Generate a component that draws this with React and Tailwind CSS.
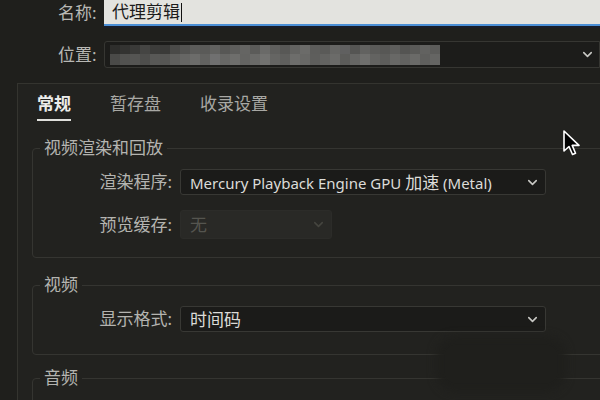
import React from 'react';
import { ChevronDown } from 'lucide-react';

const blurTop = [
  'bg-[#2e2e2c]', 'bg-[#333331]', 'bg-[#3a3a38]', 'bg-[#454543]', 'bg-[#3c3c3a]', 'bg-[#3a3a38]',
  'bg-[#4a4a48]', 'bg-[#535351]', 'bg-[#5c5c5a]', 'bg-[#5a5a58]', 'bg-[#626260]', 'bg-[#575755]',
  'bg-[#5e5e5c]', 'bg-[#656563]', 'bg-[#5b5b59]', 'bg-[#6a6a68]', 'bg-[#5f5f5d]', 'bg-[#585856]',
  'bg-[#636361]', 'bg-[#6b6b69]', 'bg-[#5d5d5b]', 'bg-[#5a5a58]', 'bg-[#666664]', 'bg-[#606060]',
  'bg-[#555553]', 'bg-[#626260]', 'bg-[#5b5b59]', 'bg-[#575755]', 'bg-[#5e5e5c]', 'bg-[#545452]',
  'bg-[#5a5a58]', 'bg-[#626260]', 'bg-[#5c5c5a]',
];
const blurBottom = [
  'bg-[#4a4a48]', 'bg-[#525250]', 'bg-[#555553]', 'bg-[#4e4e4c]', 'bg-[#585856]', 'bg-[#565654]',
  'bg-[#5f5f5d]', 'bg-[#666664]', 'bg-[#6c6c6a]', 'bg-[#626260]', 'bg-[#707070]', 'bg-[#676765]',
  'bg-[#6e6e6c]', 'bg-[#646462]', 'bg-[#6a6a68]', 'bg-[#727270]', 'bg-[#656563]', 'bg-[#5f5f5d]',
  'bg-[#6d6d6b]', 'bg-[#686866]', 'bg-[#5e5e5c]', 'bg-[#636361]', 'bg-[#6b6b69]', 'bg-[#5c5c5a]',
  'bg-[#666664]', 'bg-[#6f6f6d]', 'bg-[#636361]', 'bg-[#5d5d5b]', 'bg-[#686866]', 'bg-[#626260]',
  'bg-[#6a6a68]', 'bg-[#5f5f5d]', 'bg-[#656563]',
];

const Select = ({ children, className = '', disabled = false }) => (
  <div
    className={`flex items-center justify-between rounded-[3px] border pl-[9px] pr-[5px] ${
      disabled
        ? 'bg-[#292926] border-[#2c2c29] text-[#55554f]'
        : 'bg-[#1b1b19] border-[#383834] text-[#dcdcd8]'
    } ${className}`}
  >
    <span className="text-[17px] leading-none whitespace-nowrap">{children}</span>
    <ChevronDown
      className={`w-[15px] h-[15px] ${disabled ? 'text-[#45453f]' : 'text-[#c8c8c4]'}`}
      strokeWidth={2.5}
    />
  </div>
);

const Row = ({ label, children }) => (
  <div className="flex items-center gap-[8px]">
    <div className="w-[139px] text-right text-[17px] text-[#b4b4b0] whitespace-nowrap">{label}</div>
    {children}
  </div>
);

const Group = ({ title, children, className = '' }) => (
  <fieldset
    className={`ml-[14px] w-[640px] rounded-[4px] border border-[#353531] pl-[7px] ${className}`}
  >
    <legend className="px-[4px] text-[17px] leading-[20px] text-[#b4b4b0]">{title}</legend>
    {children}
  </fieldset>
);

export default function App() {
  return (
    <div className="relative w-[600px] h-[400px] overflow-hidden bg-[#1f1f1c] font-['Noto_Sans','Noto_Sans_CJK_SC',sans-serif]">
      {/* 名称 */}
      <div className="flex h-[26px]">
        <div className="w-[104px] pl-[58px] flex items-center text-[17px] text-[#b8b8b4]">名称:</div>
        <div className="flex-1 flex items-center bg-[#e3e3df] border-b-2 border-[#4b8fd6] pl-[8px] shadow-[0_2px_0_#1a1e2a]">
          <span className="text-[17px] text-[#1c1c1c]">代理剪辑</span>
          <span className="ml-[1px] w-[1px] h-[19px] bg-[#111]" />
        </div>
      </div>

      {/* 位置 */}
      <div className="mt-[15px] flex h-[27px]">
        <div className="w-[104px] pl-[58px] flex items-center text-[17px] text-[#b8b8b4]">位置:</div>
        <div className="flex-1 flex items-center justify-between bg-[#1c1c1a] border border-[#363632] rounded-l-[3px] pl-[5px] pr-[4px]">
          <div className="flex flex-col">
            <div className="flex h-[9px]">
              {blurTop.map((c, i) => (
                <div key={i} className={`w-[10px] ${c}`} />
              ))}
            </div>
            <div className="flex h-[11px]">
              {blurBottom.map((c, i) => (
                <div key={i} className={`w-[10px] ${c}`} />
              ))}
            </div>
          </div>
          <ChevronDown className="w-[15px] h-[15px] text-[#c8c8c4]" strokeWidth={2.5} />
        </div>
      </div>

      {/* 面板 */}
      <div className="mt-[15px] ml-[17px] h-[400px] border-l border-t border-[#34342f] bg-[#22221f]">
        <div className="flex gap-[39px] pl-[19px] pt-[9px]">
          <div className="flex flex-col items-stretch">
            <span className="text-[17px] leading-[22px] font-bold text-[#ececea]">常规</span>
            <span className="mt-[4px] h-[2px] bg-[#e0e0dc]" />
          </div>
          <span className="text-[17px] leading-[22px] text-[#a8a8a4]">暂存盘</span>
          <span className="text-[17px] leading-[22px] text-[#a8a8a4]">收录设置</span>
        </div>

        <Group title="视频渲染和回放" className="mt-[17px] pt-[11px] pb-[18px]">
          <div className="-ml-[7px] flex flex-col gap-[15px]">
            <Row label="渲染程序:">
              <Select className="w-[366px] h-[26px]">
                <span className="text-[15px]">Mercury Playback Engine GPU </span>
                加速
                <span className="text-[15px]"> (Metal)</span>
              </Select>
            </Row>
            <Row label="预览缓存:">
              <Select disabled className="w-[152px] h-[29px]">无</Select>
            </Row>
          </div>
        </Group>

        <Group title="视频" className="mt-[17px] pt-[11px] pb-[22px]">
          <div className="-ml-[7px]">
            <Row label="显示格式:">
              <Select className="w-[366px] h-[26px]">时间码</Select>
            </Row>
          </div>
        </Group>

        <Group title="音频" className="mt-[13px] h-[60px]">
          <div />
        </Group>
      </div>

      {/* 画面上的模糊遮挡 */}
      <div className="absolute left-[436px] top-[336px] w-[130px] h-[56px] rounded-[20px] bg-[#1f1f1c] blur-[4px]" />

      {/* 鼠标指针 */}
      <svg className="absolute left-[562px] top-[129px]" width="20" height="28" viewBox="0 0 20 28">
        <path
          d="M2 2 L2 22 L7 17.5 L10.5 25.5 L13.5 24.2 L10.2 16.4 L17 16.4 Z"
          fill="#000"
          stroke="#fff"
          strokeWidth="1.6"
          strokeLinejoin="round"
        />
      </svg>
    </div>
  );
}
